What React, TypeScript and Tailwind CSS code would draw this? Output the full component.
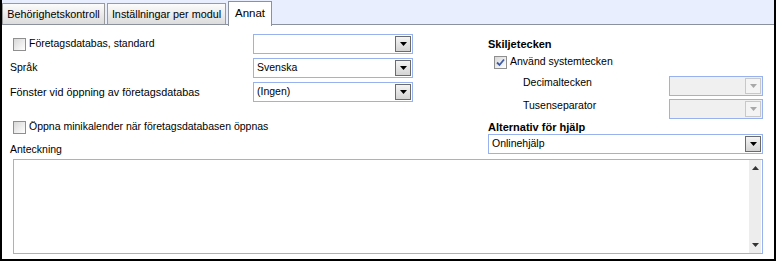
import React from "react";

const font = "font-['Tahoma','Liberation_Sans',sans-serif] text-[10.5px]";

const Checkbox: React.FC<{ checked?: boolean; label: string }> = ({
  checked,
  label,
}) => (
  <div className="flex items-center gap-[3px]">
    <div className="w-[13px] h-[13px] border border-[#8f8f8f] bg-gradient-to-br from-[#d8d8d8] to-[#ffffff] flex items-center justify-center">
      {checked && (
        <svg width="9" height="9" viewBox="0 0 9 9">
          <path
            d="M1 4.5 L3.5 7 L8 1.5"
            fill="none"
            stroke="#3d5aa8"
            strokeWidth="1.8"
          />
        </svg>
      )}
    </div>
    <span className="text-black">{label}</span>
  </div>
);

const Select: React.FC<{
  value?: string;
  width: string;
  disabled?: boolean;
}> = ({ value, width, disabled }) => (
  <div
    className={`${width} h-[20px] border border-[#97b2ee] flex items-center pl-[3px] pr-[1px] ${
      disabled ? "bg-[#f0f0f0]" : "bg-white"
    }`}
  >
    <span className="flex-1 text-black truncate">{value}</span>
    <div
      className={`w-[16px] h-[16px] flex items-center justify-center ${
        disabled
          ? "border border-[#c8c8c8] bg-[#f4f4f4]"
          : "border border-[#6b6b6b] bg-gradient-to-b from-[#f4f4f4] to-[#d4d4d4]"
      }`}
    >
      <svg width="7" height="4" viewBox="0 0 7 4">
        <path d="M0 0 H7 L3.5 4 Z" fill={disabled ? "#a8a8a8" : "#000"} />
      </svg>
    </div>
  </div>
);

const Tab: React.FC<{ label: string; active?: boolean; width: string }> = ({
  label,
  active,
  width,
}) =>
  active ? (
    <div
      className={`${width} h-[25px] mt-[1px] bg-white border border-b-0 border-[#8c919e] flex items-center justify-center -mb-[1px] relative`}
    >
      <span className="text-black text-[11.5px]">{label}</span>
    </div>
  ) : (
    <div
      className={`${width} h-[21px] mt-[3px] mr-[2px] bg-gradient-to-b from-[#fcfcfc] to-[#dcdcdc] border border-b-0 border-[#9a9a9a] flex items-center justify-center`}
    >
      <span className="text-black text-[10.8px]">{label}</span>
    </div>
  );

export default function App() {
  return (
    <div
      className={`${font} w-[776px] h-[261px] bg-white border-l-2 border-r-2 border-b-2 border-black flex flex-col overflow-hidden`}
    >
      {/* Tabs */}
      <div className="h-[25px] bg-[#e8eefd] border-b border-[#8c919e] flex items-start pl-0 shrink-0">
        <Tab label="Behörighetskontroll" width="w-[103px]" />
        <Tab label="Inställningar per modul" width="w-[119px]" />
        <Tab label="Annat" active width="w-[44px]" />
      </div>

      {/* Top section */}
      <div className="flex h-[133px] shrink-0">
        {/* Left column */}
        <div className="w-[411px] pl-[8px] pt-[9px] flex flex-col">
          <div className="h-[20px] flex items-center justify-between">
            <div className="pl-[3px]">
              <Checkbox label="Företagsdatabas, standard" />
            </div>
            <Select width="w-[160px]" />
          </div>
          <div className="h-[20px] mt-[4px] flex items-center justify-between">
            <span className="text-black">Språk</span>
            <Select width="w-[160px]" value="Svenska" />
          </div>
          <div className="h-[20px] mt-[4px] flex items-center justify-between">
            <span className="text-black text-[10.8px]">
              Fönster vid öppning av företagsdatabas
            </span>
            <Select width="w-[160px]" value="(Ingen)" />
          </div>
          <div className="h-[20px] mt-[15px] flex items-center pl-[3px]">
            <Checkbox label="Öppna minikalender när företagsdatabasen öppnas" />
          </div>
          <div className="h-[16px] mt-[5px] flex items-center">
            <span className="text-black">Anteckning</span>
          </div>
        </div>

        {/* Right column */}
        <div className="ml-[75px] w-[275px] pt-[11px] flex flex-col">
          <div className="h-[16px] flex items-center font-bold text-black text-[11px]">
            Skiljetecken
          </div>
          <div className="h-[16px] mt-[2px] flex items-center pl-[6px]">
            <Checkbox checked label="Använd systemtecken" />
          </div>
          <div className="h-[20px] mt-[6px] flex items-start justify-between pl-[35px]">
            <span className="text-black leading-[12px]">Decimaltecken</span>
            <Select width="w-[94px]" disabled />
          </div>
          <div className="h-[20px] mt-[3px] flex items-start justify-between pl-[35px]">
            <span className="text-black leading-[12px]">Tusenseparator</span>
            <Select width="w-[94px]" disabled />
          </div>
          <div className="h-[14px] mt-[1px] flex items-center font-bold text-black text-[11px]">
            Alternativ för hjälp
          </div>
          <Select width="w-[275px]" value="Onlinehjälp" />
        </div>
      </div>

      {/* Notes */}
      <div className="pl-[11px] mt-[1px]">
        <div className="w-[750px] h-[95px] border border-[#97b2ee] bg-white flex justify-end">
          <div className="w-[12px] mr-[1px] bg-[#ededed] flex flex-col items-center justify-between py-[6px]">
            <svg width="7" height="4" viewBox="0 0 7 4">
              <path d="M0 4 H7 L3.5 0 Z" fill="#333" />
            </svg>
            <svg width="7" height="4" viewBox="0 0 7 4">
              <path d="M0 0 H7 L3.5 4 Z" fill="#333" />
            </svg>
          </div>
        </div>
      </div>
    </div>
  );
}
